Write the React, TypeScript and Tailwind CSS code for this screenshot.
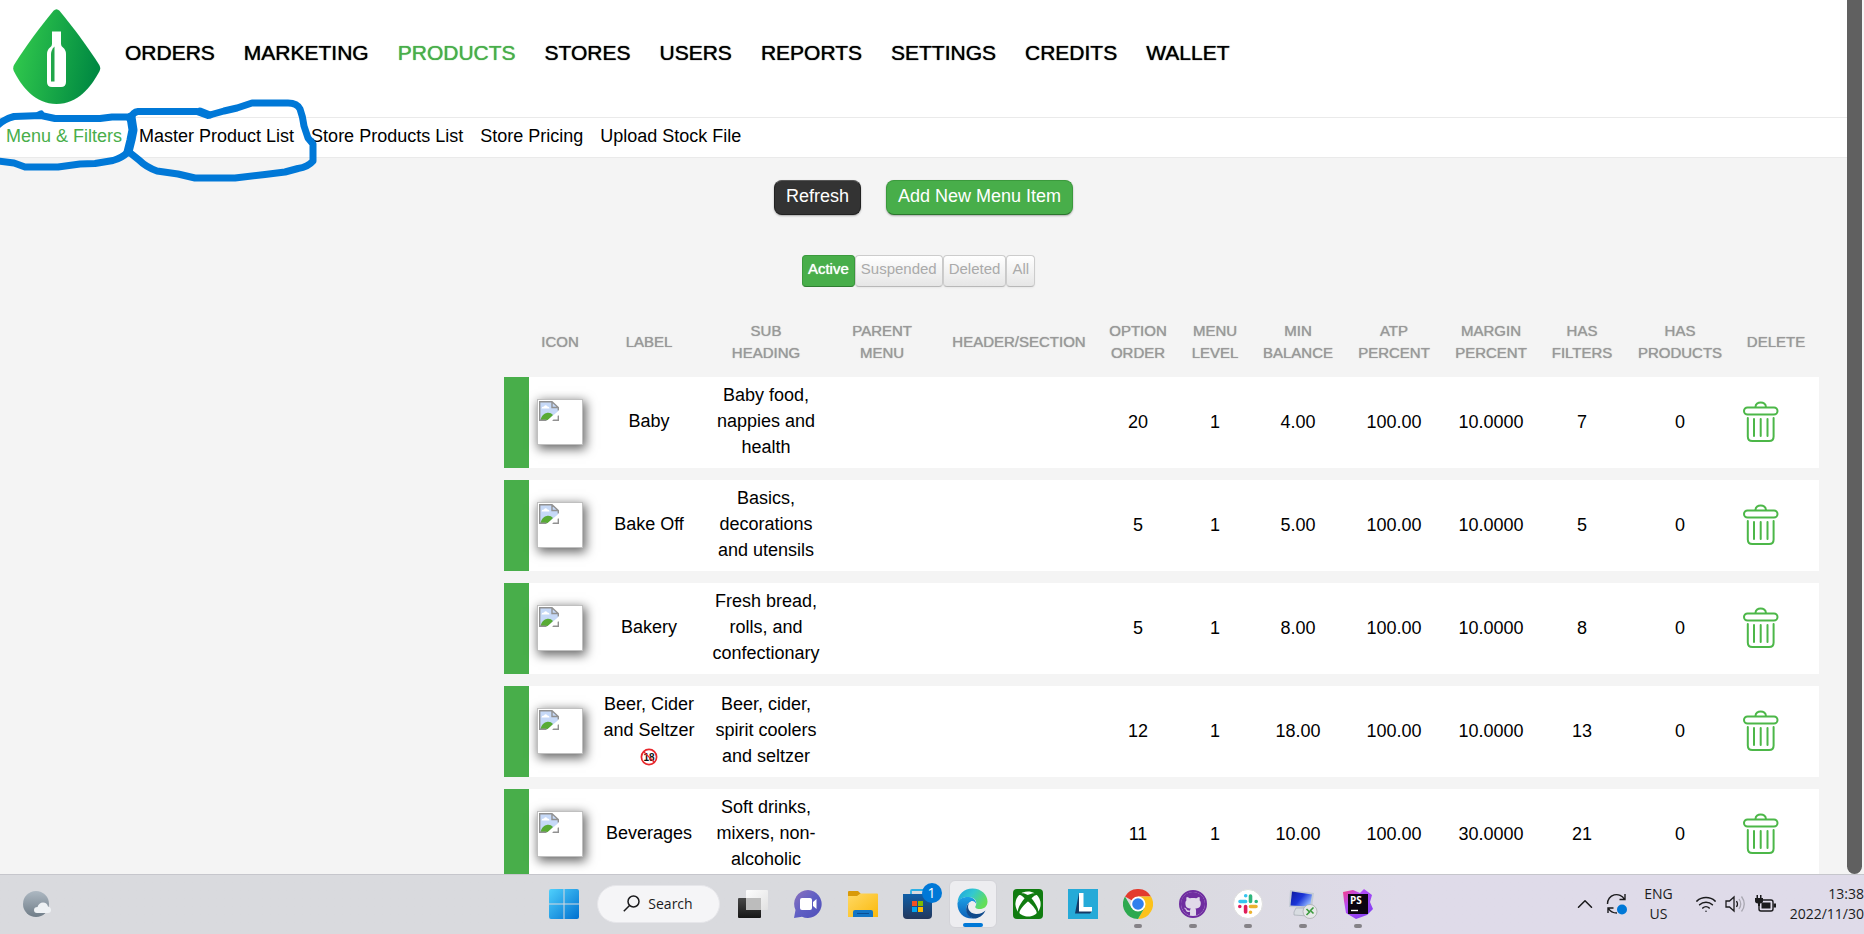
import type { ReactNode } from "react";
import { FaXbox, FaGithub } from "react-icons/fa";
import { ChevronUp, Wifi } from "lucide-react";

const NAV = ["ORDERS", "MARKETING", "PRODUCTS", "STORES", "USERS", "REPORTS", "SETTINGS", "CREDITS", "WALLET"];
const SUB_NAV = ["Menu & Filters", "Master Product List", "Store Products List", "Store Pricing", "Upload Stock File"];

type Row = { label: string; restricted?: boolean; sub: string; order: string; level: string; min: string; atp: string; margin: string; filters: string; products: string };

const ROWS: Row[] = [
  { label: "Baby", sub: "Baby food, nappies and health", order: "20", level: "1", min: "4.00", atp: "100.00", margin: "10.0000", filters: "7", products: "0" },
  { label: "Bake Off", sub: "Basics, decorations and utensils", order: "5", level: "1", min: "5.00", atp: "100.00", margin: "10.0000", filters: "5", products: "0" },
  { label: "Bakery", sub: "Fresh bread, rolls, and confectionary", order: "5", level: "1", min: "8.00", atp: "100.00", margin: "10.0000", filters: "8", products: "0" },
  { label: "Beer, Cider and Seltzer", restricted: true, sub: "Beer, cider, spirit coolers and seltzer", order: "12", level: "1", min: "18.00", atp: "100.00", margin: "10.0000", filters: "13", products: "0" },
  { label: "Beverages", sub: "Soft drinks, mixers, non-alcoholic", order: "11", level: "1", min: "10.00", atp: "100.00", margin: "30.0000", filters: "21", products: "0" },
];

function Logo() {
  return (
    <svg width="88" height="96" viewBox="0 0 88 96" aria-label="Home">
      <defs>
        <linearGradient id="drop" x1="0" y1="0.4" x2="1" y2="0.6">
          <stop offset="0.05" stopColor="#2fc64c" />
          <stop offset="0.95" stopColor="#018a42" />
        </linearGradient>
      </defs>
      <path d="M40.5 1.8Q43.5-1.400 46.500 1.800C60 18 74 37 86.300 56Q88 59 86.600 62C78 78 65 95 43.500 95C22 95 9 78 .8 62Q-.4 59 1 56C13 37 27 18 40.500 1.800Z" fill="url(#drop)" />
      <path d="M39 22.500H48V35Q48 37 50 38.500Q53 41 53 45V73Q53 78 48 78H39Q34 78 34 73V45Q34 41 37 38.500Q39 37 39 35Z" fill="#fff" />
      <path d="M41.500 37.500V72.500H38V45Q38 41 41.500 37.500Z" fill="#21a64a" />
    </svg>
  );
}

function PenMarks() {
  return (
    <svg className="pointer-events-none absolute left-0 top-0" width="330" height="190" viewBox="0 0 330 190" fill="none" stroke="#0078d7" strokeWidth="7" strokeLinecap="round" strokeLinejoin="round" aria-hidden="true">
      <path d="M-2 125Q4 119 14 116.500L41 115.500L55 118.500H100L112 117L130 117" />
      <path d="M39 115L41 114" />
      <path d="M131 117L133 130L131 140L128 152" strokeWidth="9" />
      <path d="M128 152Q122 158 113 160.500L95 163.500L80 164L58 167H25L14 163L-2 161" />
      <path d="M130 119Q133 112 138 111.500H197L208 115.500L224 111L237 108L252 103H288Q297 103 300 109Q303 117 304 126L308 138L313 144V161Q308 167 298 168.500L285 172L265 174.500L235 178H195L178 174L157 171Q146 167 139 160L129 152" />
      <path d="M200 111L210 115" />
    </svg>
  );
}

function BrokenImage() {
  return (
    <span className="inline-block h-[46px] w-[46px] border border-[#c0c0c0] bg-white text-left align-middle shadow-[2px_3px_10px_1px_rgba(0,0,0,0.6)]">
      <svg width="20" height="20" viewBox="0 0 20 20" className="m-px" aria-hidden="true">
        <path d="M.7.700H13L19.300 6.500V11L9 19.300H.7Z" fill="#c6d9f7" />
        <path d="M2.500 7.500Q2.500 5.500 5 5.500Q6.500 3 8.500 5.500Q10.500 5.500 10.500 7.500Z" fill="#fff" />
        <path d="M1.500 19Q3 12.500 8.500 11.800Q12 11.500 14 14L9 19.300Z" fill="#58ab35" />
        <path d="M19.300 14V19.300H13Z" fill="#fff" />
        <path d="M19.300 9.500V6.500L13 .7H.7V19.300H7.500M13 .7V6.500H19.300M13.500 19.300H19.300V14.500" fill="none" stroke="#919191" strokeWidth="1.400" />
        <path d="M7.500 20L20 9.500V13L12.500 20Z" fill="#fff" />
      </svg>
    </span>
  );
}

function Trash() {
  return (
    <svg width="38" height="42" viewBox="0 0 38 42" fill="none" stroke="#4cb748" strokeWidth="2" strokeLinecap="round" aria-hidden="true">
      <path d="M13.500 6C13.500 3 16 1.500 18.700 1.500S23.900 3 23.900 6" />
      <rect x="2" y="6.500" width="33.500" height="7" rx="3.500" />
      <path d="M5.800 17V35.500Q5.800 40 10.300 40H27.100Q31.600 40 31.600 35.500V17" />
      <path d="M12 18V35M18.700 18V35M25.500 18V35" />
    </svg>
  );
}

function Over18() {
  return (
    <svg width="18" height="18" viewBox="0 0 18 18" className="inline-block align-middle" role="img" aria-label="Over 18 only">
      <circle cx="9" cy="9" r="7.600" fill="#fff" stroke="#e8262b" strokeWidth="1.700" />
      <text x="9" y="12.600" textAnchor="middle" fontSize="10" fontWeight="700" fill="#111">18</text>
      <path d="M4 4L14 14" stroke="#e8262b" strokeWidth="1.200" />
    </svg>
  );
}

const COLS = ["w-[25px]", "w-[62px]", "w-[116px]", "w-[118px]", "w-[114px]", "w-[160px]", "w-[78px]", "w-[76px]", "w-[90px]", "w-[102px]", "w-[92px]", "w-[90px]", "w-[106px]", "w-[86px]"];
const HEADS = ["", "ICON", "LABEL", "SUB HEADING", "PARENT MENU", "HEADER/SECTION", "OPTION ORDER", "MENU LEVEL", "MIN BALANCE", "ATP PERCENT", "MARGIN PERCENT", "HAS FILTERS", "HAS PRODUCTS", "DELETE"];

function MenuTable() {
  return (
    <table className="ml-auto w-full max-w-[1315px] table-fixed border-separate border-spacing-x-0 border-spacing-y-3 text-center">
      <colgroup>
        {COLS.map((c, i) => (
          <col key={i} className={c} />
        ))}
      </colgroup>
      <thead>
        <tr className="h-[50px] text-[15px] leading-[22px] text-[#999]">
          {HEADS.map((h, i) => (
            <th key={i} scope="col" className="p-0 pt-1 font-normal [text-shadow:0_0_1px_#999]">
              <span className={i === 3 || i === 4 || (i > 5 && i < 13) ? "mx-auto block w-min" : ""}>{h}</span>
            </th>
          ))}
        </tr>
      </thead>
      <tbody className="text-[18px] leading-[26px] text-black">
        {ROWS.map((r) => (
          <tr key={r.label} className="h-[91px] bg-white">
            <td className="bg-[#48ae4a] p-0" />
            <td className="p-0 pb-0.5"><BrokenImage /></td>
            <td className="px-2 pb-1">
              {r.label} {r.restricted && <Over18 />}
            </td>
            <td className="px-1 pb-1">{r.sub}</td>
            <td />
            <td />
            <td className="p-0 pb-0.5">{r.order}</td>
            <td className="p-0 pb-0.5">{r.level}</td>
            <td className="p-0 pb-0.5">{r.min}</td>
            <td className="p-0 pb-0.5">{r.atp}</td>
            <td className="p-0 pb-0.5">{r.margin}</td>
            <td className="p-0 pb-0.5">{r.filters}</td>
            <td className="p-0 pb-0.5">{r.products}</td>
            <td className="p-0 pb-0.5 pl-[9px] text-left">
              <button type="button" aria-label={"Delete " + r.label} className="block"><Trash /></button>
            </td>
          </tr>
        ))}
      </tbody>
    </table>
  );
}

function Filters() {
  const base = "h-8 rounded border px-[5px] pb-1 text-[15px] leading-5";
  const off = "border-[#ccc] border-b-[#b8b8b8] bg-linear-to-b from-white to-[#e6e6e6] text-[#aaa] shadow-[0_1px_2px_rgba(0,0,0,0.05)]";
  return (
    <div className="mt-10 flex justify-center pr-2.5">
      <button type="button" className={base + " border-[#3b9a3d] border-b-[#2f7d31] bg-[#48ae4a] text-white [text-shadow:0_0_1px_#fff]"}>Active</button>
      <button type="button" className={base + " " + off}>Suspended</button>
      <button type="button" className={base + " " + off}>Deleted</button>
      <button type="button" className={base + " " + off}>All</button>
    </div>
  );
}

function Task({ label, running, active, children }: { label: string; running?: boolean; active?: boolean; children: ReactNode }) {
  return (
    <div className="flex w-[55px] shrink-0 justify-center">
      <button type="button" aria-label={label} className={"relative flex h-12 w-12 items-center justify-center rounded-md " + (active ? "border border-[#d3d3d8] bg-[#ededf0]" : "")}>
        {children}
        {running && <span className="absolute bottom-0 h-1 w-2 rounded-full bg-[#858287]" />}
        {active && <span className="absolute bottom-0 h-1 w-5 rounded-full bg-[#0078d7]" />}
      </button>
    </div>
  );
}

const StartIcon = () => (
  <svg width="30" height="30" viewBox="0 0 30 30">
    <defs><linearGradient id="win" x1="0" y1="0" x2="1" y2="1"><stop stopColor="#4fd0fc" /><stop offset="1" stopColor="#0070d0" /></linearGradient></defs>
    <path d="M2 0H14.500V14.500H0V2Q0 0 2 0ZM15.500 0H28Q30 0 30 2V14.500H15.500ZM0 15.500H14.500V30H2Q0 30 0 28ZM15.500 15.500H30V28Q30 30 28 30H15.500Z" fill="url(#win)" />
  </svg>
);
const TaskViewIcon = () => (
  <svg width="30" height="30" viewBox="0 0 30 30">
    <defs>
      <linearGradient id="tv" x1="0" y1="0" x2="0" y2="1"><stop stopColor="#484848" /><stop offset="1" stopColor="#161616" /></linearGradient>
      <linearGradient id="tw" x1="0" y1="0" x2="1" y2="1"><stop stopColor="#fff" /><stop offset="1" stopColor="#e2e2e2" /></linearGradient>
    </defs>
    <rect x="0" y="9" width="23" height="20" rx="1" fill="url(#tv)" />
    <rect x="8" y="1" width="22" height="20" rx="1" fill="url(#tw)" opacity="0.95" />
    <rect x="8" y="9" width="15" height="12" fill="#bcbcbc" />
  </svg>
);
const ChatIcon = () => (
  <svg width="30" height="30" viewBox="0 0 30 30">
    <defs><linearGradient id="chat" x1="0" y1="0" x2="1" y2="1"><stop stopColor="#8d72bd" /><stop offset="0.5" stopColor="#5f5fc4" /><stop offset="1" stopColor="#4f4eb8" /></linearGradient></defs>
    <path d="M15 1A14 14 0 1 1 9 27.800L1 29L2.500 21A14 14 0 0 1 15 1Z" fill="url(#chat)" />
    <rect x="7" y="9" width="12" height="12" rx="2" fill="#fff" />
    <path d="M20 13L23.500 10V20L20 17Z" fill="#fff" />
  </svg>
);
const FolderIcon = () => (
  <svg width="30" height="28" viewBox="0 0 30 28">
    <defs><linearGradient id="fold" x1="0" y1="0" x2="1" y2="1"><stop stopColor="#ffd965" /><stop offset="1" stopColor="#fbb90c" /></linearGradient></defs>
    <path d="M0 2Q0 1 1 1H10L13 4L9 7H0Z" fill="#d99a08" />
    <path d="M0 6H9L12.500 3.500H29Q30 3.500 30 4.500V27H0Z" fill="url(#fold)" />
    <path d="M5 27V22Q5 20 7 20H23Q25 20 25 22V27Z" fill="#1376c6" />
    <path d="M9 23.500H21" stroke="#0a4f94" />
  </svg>
);
const StoreIcon = () => (
  <svg width="30" height="30" viewBox="0 0 30 30">
    <defs><linearGradient id="store" x1="0" y1="0" x2="0" y2="1"><stop stopColor="#0f5fa8" /><stop offset="1" stopColor="#23375c" /></linearGradient></defs>
    <path d="M8 6V2Q8 1 9 1H20Q21 1 21 2V6" fill="none" stroke="#2cb0e6" strokeWidth="1.800" />
    <path d="M0 5H29V26Q29 30 25 30H4Q0 30 0 26Z" fill="url(#store)" />
    <path d="M9 12H14V17H9Z" fill="#f25022" /><path d="M15 12H20V17H15Z" fill="#7fba00" />
    <path d="M9 18H14V23H9Z" fill="#00a4ef" /><path d="M15 18H20V23H15Z" fill="#ffb900" />
  </svg>
);
const EdgeIcon = () => (
  <svg width="31" height="31" viewBox="0 0 31 31">
    <defs>
      <linearGradient id="e1" x1="0" y1="0" x2="1" y2="0.500"><stop stopColor="#1c9fe0" /><stop offset="0.500" stopColor="#33c8d0" /><stop offset="1" stopColor="#63de58" /></linearGradient>
      <linearGradient id="e2" x1="0" y1="0" x2="0" y2="1"><stop stopColor="#1ca0e6" /><stop offset="1" stopColor="#0c60b8" /></linearGradient>
    </defs>
    <path d="M.5 15C1 6 7 .500 15.500 .500C24.500 .500 30.500 7 30.500 13.500C30.500 18.500 27 21 22.500 21C19 21 17.500 19.500 18.500 18C20.500 15 19 9.500 12.500 9C6.500 8.500 1.500 11.500 .500 15Z" fill="url(#e1)" />
    <path d="M.5 15C2 10.500 7 8.500 12 9C17 9.500 19.500 13 19 16C17 12.500 10.500 13 9.500 19C8.800 24 12 29 17 30.500C7 31.500 0 24.500 .500 15Z" fill="url(#e2)" />
    <path d="M12.500 14.500C9 19 12 25.500 19 26C23 26.200 26.500 24.500 28.500 22.500C26 28 21 30.800 16.500 30.500C9 29 6.500 19 12.500 14.500Z" fill="#104a8c" />
    <path d="M12.500 14.500C14 12 18 12.500 19 16C18.600 17.200 17.800 18 18.200 19C16 20 12 18.500 12.500 14.500Z" fill="#ededf0" />
  </svg>
);
const ChromeIcon = () => (
  <svg width="30" height="30" viewBox="0 0 30 30">
    <path d="M15 15L2 7.500A15 15 0 0 1 28 7.500H15Z" fill="#e33b2e" />
    <path d="M28 7.500A15 15 0 0 1 15 30L21.500 18.800L15 7.500Z" fill="#fcc21b" />
    <path d="M2 7.500A15 15 0 0 0 15 30L21.500 18.800L8.500 18.800Z" fill="#2da94f" />
    <circle cx="15" cy="15" r="7.500" fill="#fff" />
    <circle cx="15" cy="15" r="5.800" fill="#3080ee" />
  </svg>
);
const SlackIcon = () => (
  <svg width="30" height="30" viewBox="0 0 30 30">
    <circle cx="15" cy="15" r="14.500" fill="#fff" stroke="#dedede" />
    <g strokeWidth="3.600" strokeLinecap="round">
      <path d="M12.700 6.800V6.800M7 12.500H12.600" stroke="#36c5f0" />
      <path d="M17.500 7V12.500M23.200 12.500V12.500" stroke="#2eb67d" />
      <path d="M17.500 17.500H23M17.500 23.200V23.200" stroke="#ecb22e" />
      <path d="M12.600 17.500V23M6.800 17.500V17.500" stroke="#e01e5a" />
    </g>
  </svg>
);
const RemoteIcon = () => (
  <svg width="30" height="30" viewBox="0 0 30 30">
    <defs><linearGradient id="rdp" x1="0" y1="0" x2="1" y2="0.600"><stop stopColor="#0d1a9c" /><stop offset="0.550" stopColor="#1a35d8" /><stop offset="1" stopColor="#8fb4ff" /></linearGradient></defs>
    <path d="M2 1L26 4L24 19L1 18Z" fill="#c4cbd4" />
    <path d="M4 2.500L24 5.500L22 17.500L2.500 16.500Z" fill="url(#rdp)" />
    <path d="M8 19H16L17 23H20V27L6 26V23Z" fill="#d8dce1" stroke="#9ba1aa" strokeWidth="0.600" />
    <circle cx="22" cy="22.500" r="7" fill="#e6e8e8" stroke="#a3a8a8" strokeWidth="0.700" />
    <path d="M18.500 20L21.500 23L18.500 26M25.500 18.500L22.500 21.500L25.500 24.500" fill="none" stroke="#3a9a3c" strokeWidth="1.600" />
  </svg>
);
const StormIcon = () => (
  <svg width="30" height="30" viewBox="0 0 30 30">
    <defs><linearGradient id="ps" x1="0" y1="0" x2="1" y2="1"><stop stopColor="#fb3d7c" /><stop offset="0.350" stopColor="#b24cf7" /><stop offset="1" stopColor="#7a3cf0" /></linearGradient></defs>
    <path d="M0 3L10 1L17 4L21 0L29 6L27 13L30 20L24 26L13 30L3 24L1 12Z" fill="url(#ps)" />
    <rect x="5" y="5" width="20" height="20" fill="#0b0410" />
    <text x="7" y="15" fontSize="10" fontWeight="700" fill="#fff">PS</text>
    <path d="M8 21.500H15" stroke="#fff" strokeWidth="1.400" />
  </svg>
);

function Taskbar() {
  return (
    <footer className="flex h-[60px] shrink-0 items-center overflow-hidden border-t border-[#c6c6cc] bg-linear-to-r from-[#d9dade] from-60% to-[#dfdbe9] to-75% pb-0.5 text-[#1b1b1d] [font-family:'Open_Sans',sans-serif]">
      <div className="flex min-w-0 basis-[536px] items-center pl-[22px]">
        <button type="button" aria-label="Weather">
          <svg width="30" height="28" viewBox="0 0 30 28">
            <defs><linearGradient id="moon" x1="0" y1="0" x2="0" y2="1"><stop stopColor="#adb8c2" /><stop offset="1" stopColor="#707d88" /></linearGradient></defs>
            <circle cx="14" cy="14" r="13" fill="url(#moon)" />
            <path d="M15 23Q12 23 12 20T15.500 17Q17 12.500 21 12.500T26 16.500Q29 17 29 20T26 23Z" fill="#eff2f5" />
          </svg>
        </button>
      </div>
      <Task label="Start"><StartIcon /></Task>
      <div className="flex w-[134px] shrink-0 justify-center">
        <button type="button" className="flex h-[38px] w-[123px] items-center justify-center gap-2 rounded-full border border-[#e6e6ea] bg-[#f5f5f7] text-[14px]">
          <svg width="17" height="17" viewBox="0 0 17 17" fill="none" stroke="#1b1b1d" strokeWidth="1.500"><circle cx="10.500" cy="6.500" r="5.500" /><path d="M6.500 10.500L.8 16.200" /></svg>
          Search
        </button>
      </div>
      <Task label="Task view"><TaskViewIcon /></Task>
      <Task label="Chat"><ChatIcon /></Task>
      <Task label="File Explorer"><FolderIcon /></Task>
      <Task label="Microsoft Store">
        <StoreIcon />
        <span className="absolute right-0 top-[3px] flex h-5 w-5 items-center justify-center rounded-full bg-[#0078d7] text-[14px] leading-none text-white">1</span>
      </Task>
      <Task label="Edge" active><EdgeIcon /></Task>
      <Task label="Xbox">
        <span className="flex h-[30px] w-[30px] items-center justify-center rounded-sm bg-[#107c10]"><FaXbox size={26} color="#fff" /></span>
      </Task>
      <Task label="Lenovo Vantage">
        <svg width="30" height="30" viewBox="0 0 30 30"><path d="M0 0H30V30H0Z" fill="#25aad8" /><path d="M11 4L7 24.500H22L24 22L12 20Z" fill="#153a66" /><path d="M11 4H15.500V18H24V22.500H11Z" fill="#fff" /></svg>
      </Task>
      <Task label="Chrome" running><ChromeIcon /></Task>
      <Task label="GitHub Desktop" running>
        <span className="flex h-7 w-7 items-center justify-center rounded-full border-2 border-[#6f2da0] bg-[#e0d9e9]"><FaGithub size={26} color="#6f2da0" /></span>
      </Task>
      <Task label="Slack" running><SlackIcon /></Task>
      <Task label="Remote Desktop" running><RemoteIcon /></Task>
      <Task label="PhpStorm" running><StormIcon /></Task>
      <div className="ml-auto flex shrink-0 items-center text-[14px] leading-5">
        <button type="button" aria-label="Show hidden icons"><ChevronUp size={26} strokeWidth={1.400} /></button>
        <svg className="ml-2" width="22" height="22" viewBox="0 0 22 22" fill="none" stroke="#1b1b1d" strokeWidth="1.400" aria-hidden="true">
          <path d="M1.500 11A9 9 0 0 1 18.500 6.500M19 1V6.500H13.500M2 20V15H7.500M2.500 15.500Q5 20 11 20" />
          <circle cx="16" cy="16.500" r="5" fill="#0078d7" stroke="none" />
        </svg>
        <button type="button" className="ml-4 text-center">ENG<br />US</button>
        <Wifi className="ml-[22px]" size={22} strokeWidth={1.700} aria-label="Wi-Fi" />
        <svg className="ml-2" width="22" height="18" viewBox="0 0 22 18" fill="none" stroke="#1b1b1d" strokeWidth="1.300" aria-label="Volume">
          <path d="M1 6H4.500L9 2V16L4.500 12H1ZM11.500 6Q13.500 9 11.500 12" />
          <path d="M14 4Q17.500 9 14 14M16.500 1.500Q22 9 16.500 16.500" stroke="#a9a7b1" />
        </svg>
        <svg className="ml-2" width="22" height="18" viewBox="0 0 22 18" aria-label="Battery">
          <rect x="4" y="5" width="14" height="11" rx="2" fill="none" stroke="#1b1b1d" strokeWidth="1.400" />
          <path d="M6.500 7.500H15.500V13.500H6.500ZM18.500 8.500H21V12.500H18.500Z" fill="#1b1b1d" />
          <path d="M0 3H8V6Q8 8 5 8.500V11H3V8.500Q0 8 0 6ZM1.500 0H3V3H1.500ZM5 0H6.500V3H5Z" fill="#1b1b1d" />
        </svg>
        <div className="ml-[13px] text-right">13:38<br />2022/11/30</div>
      </div>
    </footer>
  );
}

export default function App() {
  return (
    <div className="flex h-screen flex-col overflow-hidden bg-[#f4f4f4] [font-family:'Liberation_Sans',Arial,sans-serif]">
      <div className="flex min-h-0 flex-1">
        <div className="relative min-w-0 flex-1 overflow-hidden">
          <header className="flex h-[117px] items-center bg-white pl-[13px]">
            <a href="#home" className="-mt-1"><Logo /></a>
            <nav className="-mt-3 ml-6 flex gap-[29px] text-[21px]">
              {NAV.map((n) => (
                <a key={n} href="#nav" className={n === "PRODUCTS" ? "text-[#48ae4a] [text-shadow:0_0_1px_#48ae4a]" : "text-black [text-shadow:0_0_1px_#000]"}>{n}</a>
              ))}
            </nav>
          </header>
          <nav className="flex h-[41px] items-center gap-[17px] border-y border-[#eaeaea] bg-white pb-0.5 pl-1.5 text-[18px]">
            {SUB_NAV.map((n, i) => (
              <a key={n} href="#sub" className={i === 0 ? "text-[#48ae4a]" : "text-black"}>{n}</a>
            ))}
          </nav>
          <main className="pt-[22px]">
            <div className="flex justify-center gap-[25px] text-[18px] text-white">
              <button type="button" className="h-[35px] rounded-lg border border-[#222] border-t-[#555] bg-[#333] px-[11px] pb-1 leading-6 shadow-[0_1px_2px_rgba(0,0,0,0.3)]">Refresh</button>
              <button type="button" className="h-[35px] rounded-lg border border-[#3b9a3d] border-b-[#2c752e] bg-[#48ae4a] px-[11px] pb-1 leading-6 shadow-[0_1px_2px_rgba(0,0,0,0.3)]">Add New Menu Item</button>
            </div>
            <Filters />
            <div className="mt-4 pr-7">
              <MenuTable />
            </div>
          </main>
          <PenMarks />
        </div>
        <div className="w-[17px] shrink-0 pr-0.5" aria-hidden="true">
          <div className="h-full rounded-b-full bg-[#606060]" />
        </div>
      </div>
      <Taskbar />
    </div>
  );
}
